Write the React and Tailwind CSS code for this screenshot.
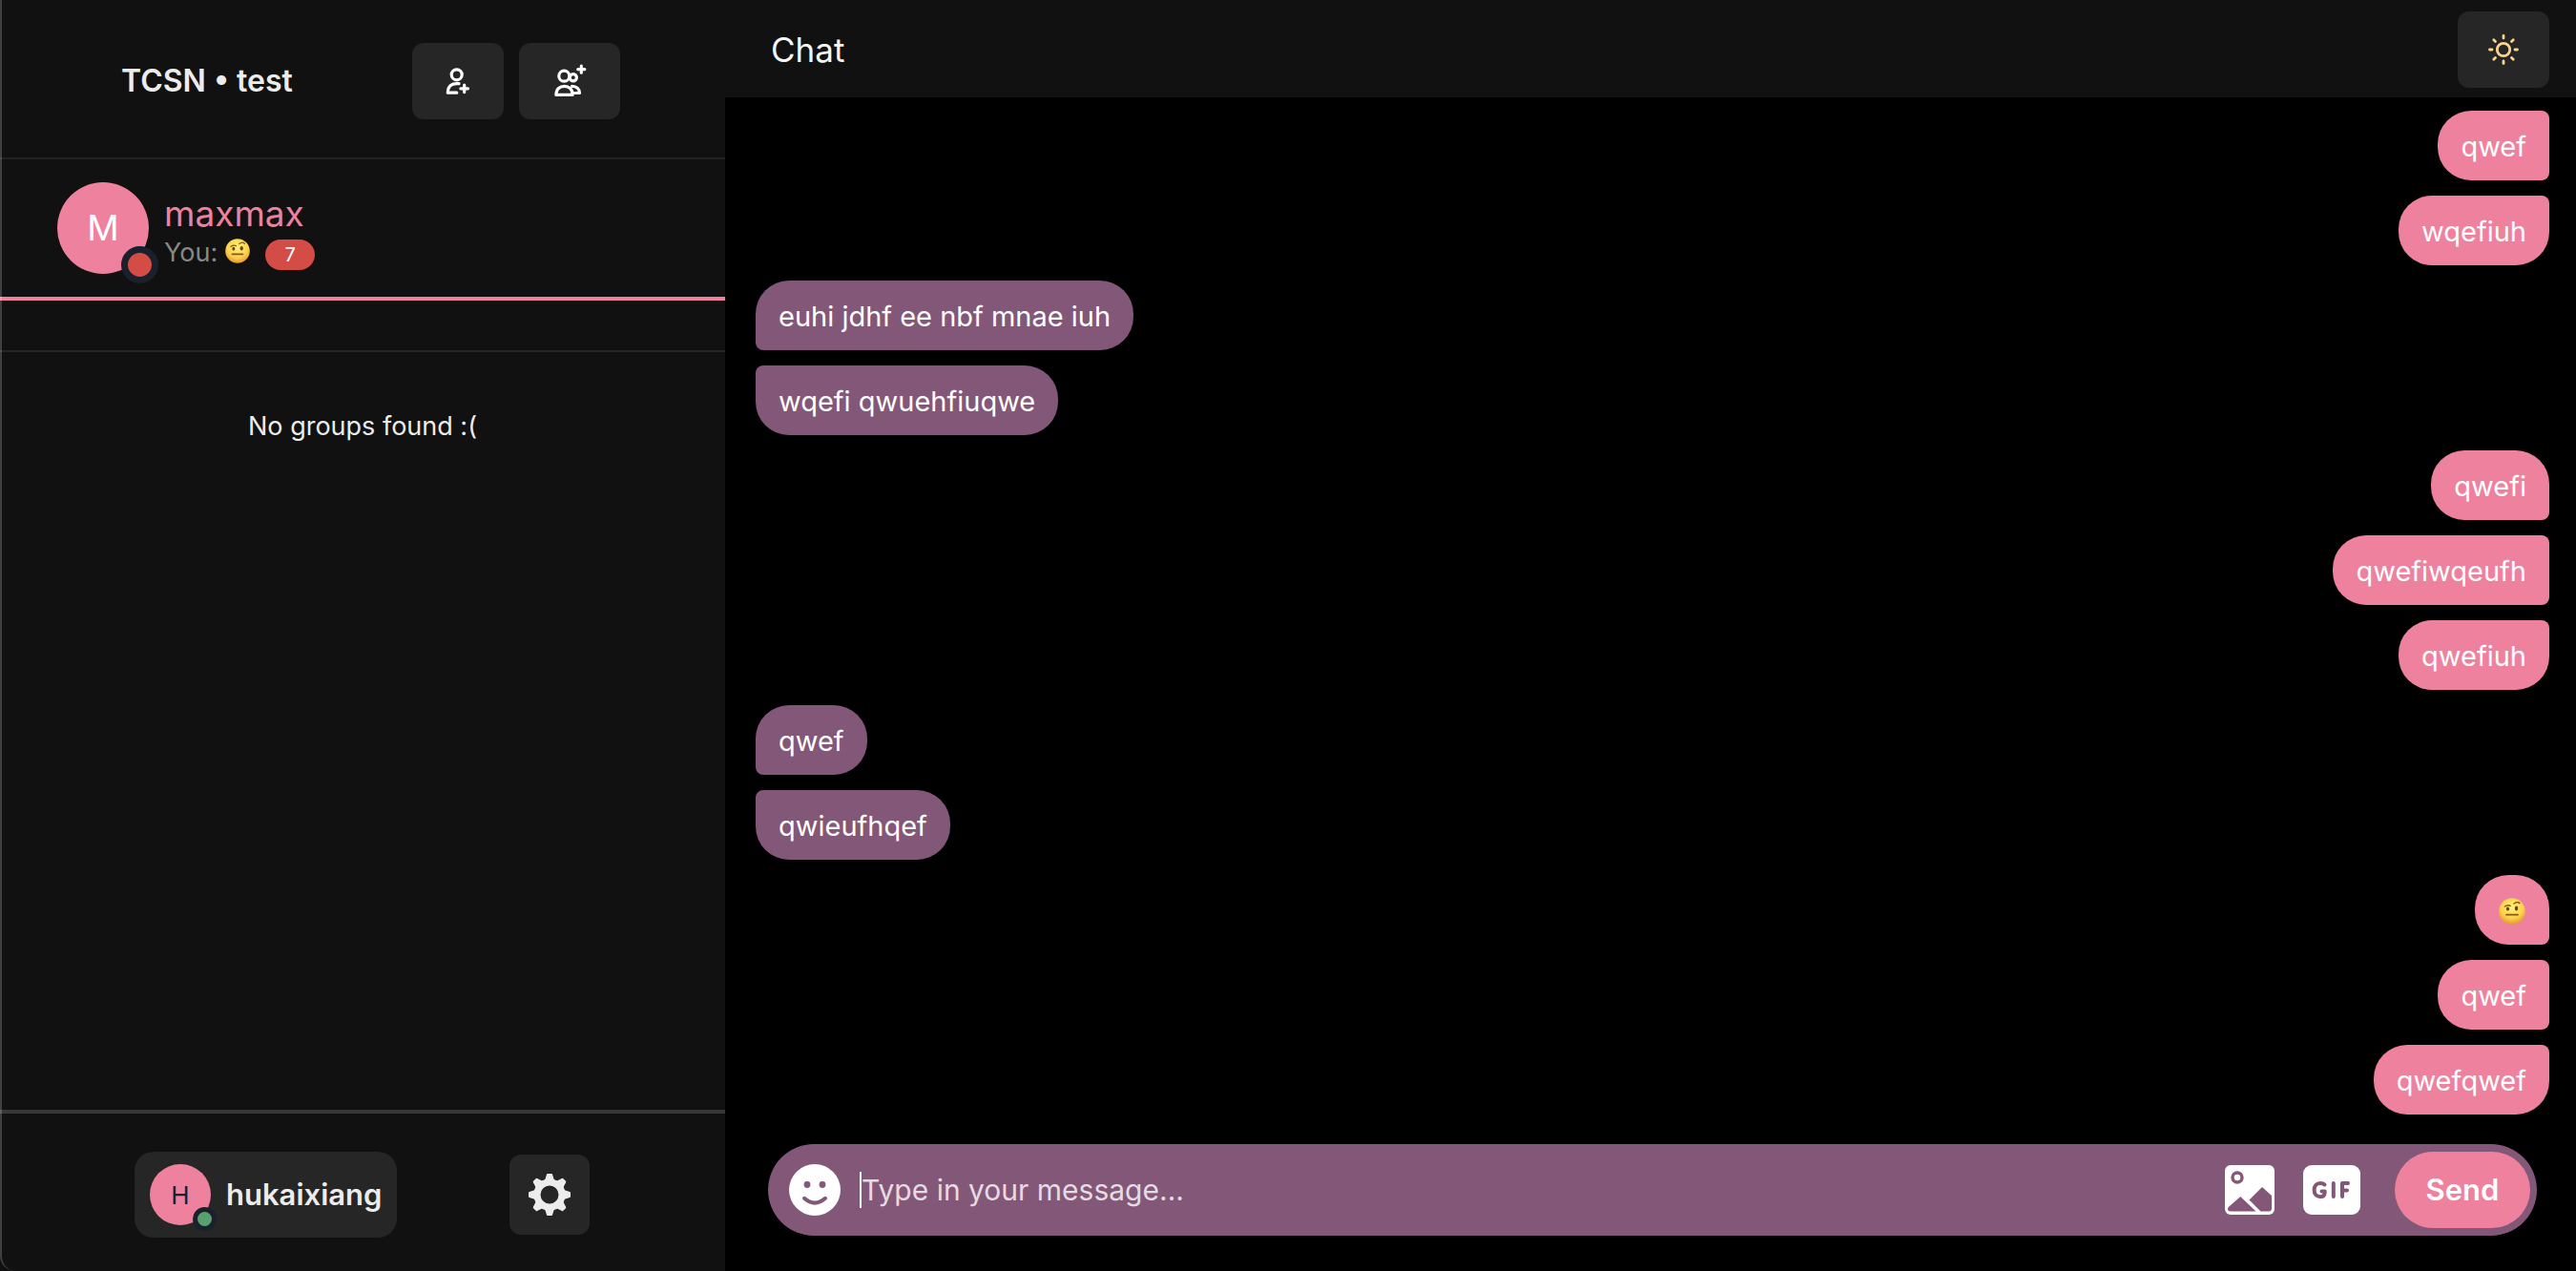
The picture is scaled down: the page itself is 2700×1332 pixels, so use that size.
const octants = [0, 45, 90, 135, 180, 225, 270, 315];

function RaisedBrow({ className }) {
  return (
    <svg viewBox="0 0 26 26" className={className} role="img" aria-label="face with raised eyebrow">
      <defs>
        <radialGradient id="skin" cx="50%" cy="35%" r="65%">
          <stop offset="0" stopColor="#fff27a" />
          <stop offset="0.65" stopColor="#fcd14b" />
          <stop offset="1" stopColor="#e5982c" />
        </radialGradient>
      </defs>
      <circle cx="13" cy="13" r="12.8" fill="url(#skin)" />
      <ellipse cx="8.800" cy="10.700" rx="1.500" ry="1.900" fill="#6b3f10" />
      <ellipse cx="17.200" cy="10.300" rx="1.600" ry="2.300" fill="#6b3f10" />
      <path d="M6 8.4Q8.5 6.3 11.4 7.7M14.8 5.6Q18 2.8 20.4 5.2" stroke="#8a5614" strokeWidth="1.3" fill="none" strokeLinecap="round" />
      <path d="M7.500 16.400H18.500" stroke="#8a5614" strokeWidth="1.700" strokeLinecap="round" />
    </svg>
  );
}

function UserAdd() {
  return (
    <svg viewBox="0 0 32 32" className="size-8" fill="none" stroke="#fff" strokeWidth="3.2" strokeLinecap="round" strokeLinejoin="round" aria-hidden="true">
      <circle cx="14.7" cy="9.3" r="5.500" />
      <path d="M17 18.700Q5.500 17.400 5.300 28.200H14.800" />
      <path d="M22.700 20V27.600M18.900 23.800H26.500" />
    </svg>
  );
}

function GroupAdd() {
  return (
    <svg viewBox="0 0 36 36" className="size-9" fill="none" stroke="#fff" strokeWidth="3.2" strokeLinecap="round" strokeLinejoin="round" aria-hidden="true">
      <circle cx="12.300" cy="12.700" r="5.500" />
      <circle cx="21.800" cy="14.300" r="3.600" />
      <path d="M3.900 32.400C3.900 26 8 23.300 12.500 23.300S21.100 26 21.100 32.400Z" />
      <path d="M20.500 23.300C25.500 23.300 28.500 26.500 28.500 30.500H23" />
      <path d="M30.300 2.200V9.200M26.800 5.700H33.800" />
    </svg>
  );
}

function Sun() {
  return (
    <svg viewBox="-16 -16 32 32" className="size-8" fill="none" stroke="#fbd38d" strokeWidth="2.8" strokeLinecap="round" aria-hidden="true">
      <circle r="6.700" />
      {octants.map((a) => (
        <path key={a} d="M0 -14.500V-12" transform={`rotate(${a})`} />
      ))}
    </svg>
  );
}

function Gear() {
  return (
    <svg viewBox="-22 -22 44 44" className="size-11" aria-hidden="true">
      <circle r="13" fill="none" stroke="#ececec" strokeWidth="7" />
      {octants.map((a) => (
        <path key={a} d="M-6.500 -14L-4.500 -16.500L-3 -21.200Q-2.700 -22 -2 -22H2Q2.700 -22 3 -21.200L4.500 -16.500L6.500 -14Z" fill="#ececec" transform={`rotate(${a})`} />
      ))}
    </svg>
  );
}

function Smile() {
  return (
    <svg viewBox="0 0 54 54" className="size-[54px]" aria-hidden="true">
      <circle cx="27" cy="27" r="27" fill="#fff" />
      <circle cx="19" cy="21.500" r="3.400" fill="#835777" />
      <circle cx="35" cy="21.500" r="3.400" fill="#835777" />
      <path d="M16 35.800Q27 45.500 38 35.800" fill="none" stroke="#835777" strokeWidth="4" strokeLinecap="round" />
    </svg>
  );
}

function Picture() {
  return (
    <svg viewBox="0 0 52 52" className="size-13" aria-hidden="true">
      <rect width="52" height="52" rx="6" fill="#fff" />
      <circle cx="13" cy="13" r="5" fill="none" stroke="#835777" strokeWidth="3.4" />
      <path d="M3.500 44.200L16.300 33L32.500 48.500H6Q3 48.500 3 46ZM25.500 36.500L39 23L49 32V45.500Q49 48.500 46 48.500H37.500Z" fill="#835777" />
    </svg>
  );
}

function Gif() {
  return (
    <svg viewBox="0 0 60 52" className="h-13 w-15" aria-hidden="true">
      <rect width="60" height="52" rx="9" fill="#fff" />
      <path d="M22.500 20.500Q21 19 18 19C13.800 19 11.600 22 11.600 26S13.800 33.200 18 33.200Q22.700 33.200 22.700 28.500V27.500H19.500M31.800 19V33M41 33V19H47M41 26.500H46" fill="none" stroke="#835777" strokeWidth="4" strokeLinecap="round" strokeLinejoin="round" />
    </svg>
  );
}

const mineMiddle = "rounded-l-[35px] rounded-r-lg";
const mineLast = "rounded-l-[35px] rounded-tr-lg rounded-br-[35px]";
const mineFirst = "rounded-t-[35px] rounded-bl-[35px] rounded-br-lg";
const theirsFirst = "rounded-t-[35px] rounded-br-[35px] rounded-bl-lg";
const theirsLast = "rounded-b-[35px] rounded-tr-[35px] rounded-tl-lg";

const messages = [
  { mine: true, text: "qwef", shape: mineMiddle },
  { mine: true, text: "wqefiuh", shape: mineLast },
  { text: "euhi jdhf ee nbf mnae iuh", shape: theirsFirst },
  { text: "wqefi qwuehfiuqwe", shape: theirsLast },
  { mine: true, text: "qwefi", shape: mineFirst },
  { mine: true, text: "qwefiwqeufh", shape: mineMiddle },
  { mine: true, text: "qwefiuh", shape: mineLast },
  { text: "qwef", shape: theirsFirst },
  { text: "qwieufhqef", shape: theirsLast },
  { mine: true, emoji: true, shape: mineFirst },
  { mine: true, text: "qwef", shape: mineMiddle },
  { mine: true, text: "qwefqwef", shape: mineLast },
];

function Sidebar() {
  return (
    <aside className="flex w-[760px] shrink-0 flex-col bg-[#111]">
      <header className="flex items-center justify-between border-b-2 border-[#222] pt-[45px] pr-[110px] pb-10 pl-[127px]">
        <h1 className="text-[32px] font-semibold text-[#ececec]">TCSN • test</h1>
        <div className="flex gap-4">
          <button aria-label="Add friend" className="flex h-20 w-24 items-center justify-center rounded-xl bg-[#262626]"><UserAdd /></button>
          <button aria-label="Create group" className="flex h-20 w-[106px] items-center justify-center rounded-xl bg-[#262626]"><GroupAdd /></button>
        </div>
      </header>
      <a href="#maxmax" className="flex gap-4 border-b-4 border-[#ee819d] px-[60px] py-6">
        <div className="relative flex size-24 items-center justify-center rounded-full bg-[#ee819d] text-[37px] text-white">
          M
          <span className="absolute -right-[10px] -bottom-[10px] size-[39px] rounded-full border-7 border-[#1a202c] bg-[#d34c46]" />
        </div>
        <div className="pt-3">
          <div className="text-[37px] leading-[42px] text-[#ee819d]">maxmax</div>
          <div className="flex items-center text-[27px] leading-10 text-[#888]">
            You:
            <RaisedBrow className="mr-4 mb-1 ml-2 size-[26px]" />
            <span className="mt-1 flex h-8 w-[52px] items-center justify-center rounded-full bg-[#d34c46] text-xl text-white">7</span>
          </div>
        </div>
      </a>
      <div className="h-[54px] border-b-2 border-[#262626]" />
      <p className="flex-1 pt-[58px] text-center text-[27px] leading-10 text-[#ececec]">No groups found :(</p>
      <footer className="flex items-center justify-between border-t-4 border-[#383838] pt-10 pr-[142px] pb-[35px] pl-[141px]">
        <button className="flex h-[90px] items-center gap-4 rounded-[20px] bg-[#262626] px-4">
          <span className="relative flex size-16 items-center justify-center rounded-full bg-[#ee819d] text-[26px] text-[#1a202c]">
            H
            <span className="absolute -right-[6px] -bottom-[6px] size-[25px] rounded-full border-5 border-[#1a202c] bg-[#58a06f]" />
          </span>
          <span className="text-[31px] font-semibold text-[#ececec]">hukaixiang</span>
        </button>
        <button aria-label="Settings" className="flex size-[84px] items-center justify-center rounded-xl bg-[#262626]"><Gear /></button>
      </footer>
    </aside>
  );
}

export default function App() {
  return (
    <div className="relative flex min-h-screen bg-black font-['Inter',sans-serif]">
      <Sidebar />
      <main className="flex min-w-0 flex-1 flex-col">
        <header className="flex items-center justify-between bg-[#111] pt-3 pr-7 pb-[10px] pl-12">
          <h2 className="text-[35px] text-[#f5f5f5]">Chat</h2>
          <button aria-label="Light mode" className="flex h-20 w-24 items-center justify-center rounded-xl bg-[#262626]"><Sun /></button>
        </header>
        <div className="flex flex-1 flex-col gap-4 pt-[14px] pr-7 pl-8 text-[29px] leading-[33px] text-white">
          {messages.map((m, i) => (
            <div key={i} className={`flex h-[73px] items-center px-6 pt-0.5 ${m.mine ? "self-end bg-[#ee819d]" : "self-start bg-[#835777]"} ${m.shape}`}>
              {m.emoji ? <RaisedBrow className="mx-px size-7" /> : m.text}
            </div>
          ))}
        </div>
        <form className="mr-[41px] mb-[37px] ml-[45px] flex h-24 items-center rounded-full bg-[#835777] pr-[7px] pl-[22px]">
          <button type="button" aria-label="Emoji"><Smile /></button>
          <input aria-label="Message" placeholder="Type in your message..." className="ml-5 h-[38px] min-w-0 flex-1 border-l-2 border-white text-[30px] text-white outline-none placeholder:text-[#e6dbe3]" />
          <button type="button" aria-label="Add picture" className="mr-[30px]"><Picture /></button>
          <button type="button" aria-label="Add GIF" className="mr-9"><Gif /></button>
          <button type="button" className="h-20 w-[142px] rounded-full bg-[#ee819d] text-[31px] font-semibold text-white">Send</button>
        </form>
      </main>
      <div className="pointer-events-none absolute inset-0 rounded-b-2xl border-l-2 border-white/20" />
    </div>
  );
}
